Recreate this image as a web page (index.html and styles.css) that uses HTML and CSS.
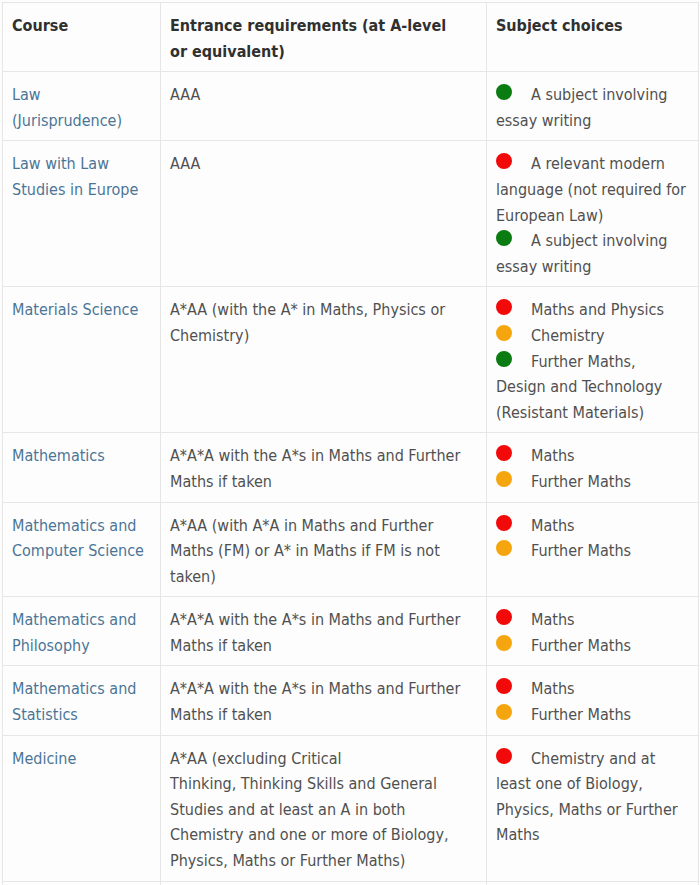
FILE: index.html
```html
<!DOCTYPE html>
<html lang="en">
<head>
<meta charset="utf-8">
<title>Course requirements</title>
<link rel="stylesheet" href="styles.css">
</head>
<body>
<table class="courses">
  <colgroup>
    <col class="c-course">
    <col class="c-req">
    <col class="c-subj">
  </colgroup>
  <thead>
    <tr>
      <th>Course</th>
      <th>Entrance requirements (at A-level<br>or equivalent)</th>
      <th>Subject choices</th>
    </tr>
  </thead>
  <tbody>
    <tr>
      <td><a class="course" href="#">Law (Jurisprudence)</a></td>
      <td>AAA</td>
      <td><span class="dot green"></span>A subject involving essay writing</td>
    </tr>
    <tr>
      <td><a class="course" href="#">Law with Law Studies in Europe</a></td>
      <td>AAA</td>
      <td><span class="dot red"></span>A relevant modern language (not required for European Law)<br><span class="dot green"></span>A subject involving essay writing</td>
    </tr>
    <tr>
      <td><a class="course" href="#">Materials Science</a></td>
      <td>A*AA (with the A* in Maths, Physics or Chemistry)</td>
      <td><span class="dot red"></span>Maths and Physics<br><span class="dot orange"></span>Chemistry<br><span class="dot green"></span>Further Maths, Design and Technology (Resistant Materials)</td>
    </tr>
    <tr>
      <td><a class="course" href="#">Mathematics</a></td>
      <td>A*A*A with the A*s in Maths and Further Maths if taken</td>
      <td><span class="dot red"></span>Maths<br><span class="dot orange"></span>Further Maths</td>
    </tr>
    <tr>
      <td><a class="course" href="#">Mathematics and Computer Science</a></td>
      <td>A*AA (with A*A in Maths and Further Maths (FM) or A* in Maths if FM is not taken)</td>
      <td><span class="dot red"></span>Maths<br><span class="dot orange"></span>Further Maths</td>
    </tr>
    <tr>
      <td><a class="course" href="#">Mathematics and Philosophy</a></td>
      <td>A*A*A with the A*s in Maths and Further Maths if taken</td>
      <td><span class="dot red"></span>Maths<br><span class="dot orange"></span>Further Maths</td>
    </tr>
    <tr>
      <td><a class="course" href="#">Mathematics and Statistics</a></td>
      <td>A*A*A with the A*s in Maths and Further Maths if taken</td>
      <td><span class="dot red"></span>Maths<br><span class="dot orange"></span>Further Maths</td>
    </tr>
    <tr>
      <td><a class="course" href="#">Medicine</a></td>
      <td>A*AA (excluding Critical<br>Thinking, Thinking Skills and General Studies and at least an A in both Chemistry and one or more of Biology, Physics, Maths or Further Maths)</td>
      <td><span class="dot red"></span>Chemistry and at least one of Biology, Physics, Maths or Further Maths</td>
    </tr>
    <tr>
      <td><a class="course" href="#">&nbsp;</a></td>
      <td>&nbsp;</td>
      <td>&nbsp;</td>
    </tr>
  </tbody>
</table>
</body>
</html>
```

FILE: styles.css
```css
html, body {
  margin: 0;
  padding: 0;
  background: #fdfdfd;
}

body {
  padding: 2px 2px 0 2px;
  font-family: "DejaVu Sans Condensed", "DejaVu Sans", sans-serif;
  font-size: 16px;
  line-height: 25.6px;
  color: #505050;
}

.courses {
  width: 696px;
  border-collapse: collapse;
  table-layout: fixed;
}

.c-course { width: 158px; }
.c-req { width: 326px; }
.c-subj { width: 212px; }

.courses th,
.courses td {
  border: 1px solid #e6e6e6;
  padding: 10px 9px 7px 9px;
  text-align: left;
  vertical-align: top;
}

.courses th {
  font-weight: 700;
  color: #303030;
}

.course {
  color: #4b7596;
  text-decoration: none;
}

.dot {
  display: inline-block;
  width: 16px;
  height: 16px;
  border-radius: 50%;
  margin-right: 19px;
  vertical-align: 0;
}

.dot.red { background: #f20a0a; }
.dot.orange { background: #f5a60e; }
.dot.green { background: #0b7c12; }
```
